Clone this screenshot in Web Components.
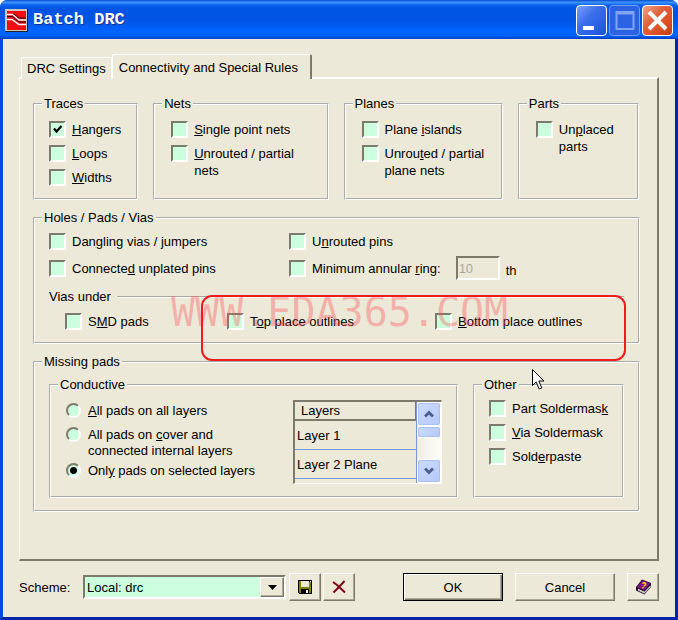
<!DOCTYPE html>
<html lang="en">
<head>
<meta charset="utf-8">
<title>Batch DRC</title>
<style>
    body {
        margin: 0;
        background: #fff;
        color: #000;
        font: 13px/17px "Liberation Sans", Arial, sans-serif;
        --face: #ece9d8;
        --field: #ccffdd;
        --shade: #7d7a6c;
        --edge: #aca899;
    }
    .top { display: grid; grid-template-columns: 105fr 175fr 159fr 121fr; gap: 15px; padding-right: 1px; }
    .top dlg-group { --top: 9px; }
    .list { display: flex; flex-direction: column; gap: 7px; }
    .inset { padding-left: 2px; }
    .holes { display: grid; grid-template-columns: 240fr 335fr; row-gap: 6px; align-items: center; margin-bottom: 8px; }
    .ring { display: flex; align-items: center; }
    .vias { position: relative; }
    .via-row { display: grid; grid-template-columns: 162fr 208fr 189fr; padding: 8px 0 0 16px; }
    .missing { display: grid; grid-template-columns: 409fr 151fr; gap: 15px; position: relative; }
    .conductive { display: flex; justify-content: space-between; }
    .radios { display: flex; flex-direction: column; gap: 4px; padding-top: 3px; }
</style>
</head>
<body>
<xp-window caption="Batch DRC">
    <dlg-tabs>
        <dlg-tab slot="tabs">DRC Settings</dlg-tab>
        <dlg-tab slot="tabs" active>Connectivity and Special Rules</dlg-tab>

        <div class="top">
            <dlg-group legend="Traces">
                <div class="list">
                    <dlg-check checked><u>H</u>angers</dlg-check>
                    <dlg-check><u>L</u>oops</dlg-check>
                    <dlg-check><u>W</u>idths</dlg-check>
                </div>
            </dlg-group>
            <dlg-group legend="Nets">
                <div class="list inset">
                    <dlg-check><u>S</u>ingle point nets</dlg-check>
                    <dlg-check><u>U</u>nrouted / partial<br>nets</dlg-check>
                </div>
            </dlg-group>
            <dlg-group legend="Planes">
                <div class="list inset">
                    <dlg-check>Plane <u>i</u>slands</dlg-check>
                    <dlg-check>Unrou<u>t</u>ed / partial<br>plane nets</dlg-check>
                </div>
            </dlg-group>
            <dlg-group legend="Parts">
                <div class="list inset">
                    <dlg-check>Un<u>p</u>laced<br>parts</dlg-check>
                </div>
            </dlg-group>
        </div>

        <dlg-group legend="Holes / Pads / Vias">
            <div class="holes">
                <dlg-check>Dan<u>g</u>ling vias / jumpers</dlg-check>
                <dlg-check>U<u>n</u>routed pins</dlg-check>
                <dlg-check>Connecte<u>d</u> unplated pins</dlg-check>
                <div class="ring">
                    <dlg-check>Minimum annular <u>r</u>ing:</dlg-check>
                    <dlg-field label="Minimum annular ring" value="10" unit="th"></dlg-field>
                </div>
            </div>
            <div class="vias">
                <dlg-section heading="Vias under">
                    <div class="via-row">
                        <dlg-check>S<u>M</u>D pads</dlg-check>
                        <dlg-check>T<u>o</u>p place outlines</dlg-check>
                        <dlg-check><u>B</u>ottom place outlines</dlg-check>
                    </div>
                </dlg-section>
                <water-mark>WWW.EDA365.COM</water-mark>
                <call-out></call-out>
            </div>
        </dlg-group>

        <dlg-group legend="Missing pads">
            <div class="missing">
                <dlg-group legend="Conductive">
                    <div class="conductive">
                        <div class="radios">
                            <dlg-radio><u>A</u>ll pads on all layers</dlg-radio>
                            <dlg-radio>All pads on <u>c</u>over and<br>connected internal layers</dlg-radio>
                            <dlg-radio checked>Onl<u>y</u> pads on selected layers</dlg-radio>
                        </div>
                        <layer-list rows="Layer 1|Layer 2 Plane"></layer-list>
                    </div>
                </dlg-group>
                <dlg-group legend="Other">
                    <div class="list">
                        <dlg-check>Part Soldermas<u>k</u></dlg-check>
                        <dlg-check><u>V</u>ia Soldermask</dlg-check>
                        <dlg-check>Sold<u>e</u>rpaste</dlg-check>
                    </div>
                </dlg-group>
                <mouse-arrow></mouse-arrow>
            </div>
        </dlg-group>
    </dlg-tabs>
    <dlg-footer slot="footer"></dlg-footer>
</xp-window>

<script>
// Small helper: every element renders once into an open shadow root
class Base extends HTMLElement {
    connectedCallback() {
        if (this.shadowRoot) return;
        this.attachShadow({ mode: "open" });
        this.shadowRoot.innerHTML = this.render();
        this.ready();
    }
    ready() {}
}

// Window frame and title bar
class XpWindow extends Base {
    render() {
        return `
            <style>
            :host {
                display: flex;
                flex-direction: column;
                box-sizing: border-box;
                min-height: 100vh;
                background: var(--face);
                border: 3px solid #0a48dc;
                border-top: 0;
                border-right-color: #0526a8;
                border-bottom-color: #0526a8;
                border-radius: 8px 8px 0 0;
            }
            header {
                display: flex;
                align-items: center;
                gap: 2px;
                height: 39px;
                margin: 0 -3px;
                padding: 1px 5px 0;
                box-sizing: border-box;
                border-radius: 7px 7px 0 0;
                background: linear-gradient(#0a4cd0, #3c94ff 6%, #0a62ee 13%, #0054e3 22%, #0055e6 55%, #0064ff 80%, #0062fa 92%, #003ec0);
            }
            h1 {
                flex: 1;
                margin: 0 0 0 3px;
                color: #fff;
                font: bold 17px/24px "Liberation Mono", monospace;
                text-shadow: 1px 1px #0a2f8c;
            }
            button {
                width: 31px;
                height: 31px;
                padding: 0;
                border: 1px solid #fff;
                border-radius: 4px;
                background: linear-gradient(135deg, #7ea2f5, #3b6ee8 40%, #2a62e4 70%, #1d4fd0);
            }
            button svg { display: block; }
            .max { border-color: #6f9cf5; background: #2a62e2; }
            .close { background: linear-gradient(135deg, #f0a48c, #e2603c 40%, #dc4f24 70%, #c23c14); }
            main {
                flex: 1;
                display: flex;
                flex-direction: column;
                padding: 15px 16px 16px;
            }
            </style>
            <header>
                <svg width="23" height="23" viewBox="0 0 23 23">
                    <rect width="23" height="23" fill="#222"/>
                    <rect width="22" height="22" fill="#ccc8c0"/>
                    <rect x="2" y="2" width="19" height="19" fill="#f20d12"/>
                    <g fill="none" stroke="#fff" stroke-width="1.5">
                        <path d="M2 5.500h6l6 5.500h7"/>
                        <path d="M2 10.500h5l7 5h7"/>
                    </g>
                    <g fill="none" stroke="#3a0508">
                        <path d="M2 7.500h5.500l6.500 5.500h7"/>
                        <path d="M8 4.500l6 4.500h7"/>
                    </g>
                </svg>
                <h1>${this.getAttribute("caption")}</h1>
                <button aria-label="Minimize"><svg width="29" height="29"><path d="M6 20h11v4H6z" fill="#fff"/></svg></button>
                <button class="max" aria-label="Maximize" disabled><svg width="29" height="29"><path d="M6 7.500h17M6.500 6v17h17V6z" fill="none" stroke="#7fa4f4" stroke-width="2"/></svg></button>
                <button class="close" aria-label="Close"><svg width="29" height="29"><path d="M6 6l17 17M23 6L6 23" stroke="#fff" stroke-width="4"/></svg></button>
            </header>
            <main>
                <slot></slot>
                <slot name="footer"></slot>
            </main>
        `;
    }
}
customElements.define("xp-window", XpWindow);

// Tab strip with its raised page
class DlgTabs extends Base {
    render() {
        return `
            <style>
            :host { flex: 1; display: flex; flex-direction: column; }
            .strip { display: flex; align-items: flex-end; padding-left: 2px; height: 25px; margin-bottom: -2px; z-index: 1; }
            .page {
                flex: 1;
                display: flex;
                flex-direction: column;
                gap: 10px;
                padding: 17px 17px 17px 13px;
                border: solid;
                border-width: 2px 2px 2px 1px;
                border-color: #fff var(--shade) var(--shade) #fff;
            }
            </style>
            <div class="strip" role="tablist"><slot name="tabs"></slot></div>
            <div class="page" role="tabpanel"><slot></slot></div>
        `;
    }
}
customElements.define("dlg-tabs", DlgTabs);

class DlgTab extends Base {
    render() {
        return `
            <style>
            :host { display: block; }
            button {
                display: block;
                height: 22px;
                padding: 0 5px;
                border: 1px solid #fff;
                border-bottom: 0;
                border-radius: 2px 2px 0 0;
                background: var(--face);
                color: inherit;
                font: inherit;
                white-space: nowrap;
            }
            :host([active]) button {
                height: 25px;
                padding: 0 12px 0 6px;
                border-right: 2px solid var(--shade);
            }
            </style>
            <button role="tab" aria-selected="${this.hasAttribute("active")}"><slot></slot></button>
        `;
    }
}
customElements.define("dlg-tab", DlgTab);

// Etched group box
class DlgGroup extends Base {
    render() {
        return `
            <style>
            :host { display: grid; min-width: 0; }
            fieldset {
                min-width: 0;
                margin: 0;
                padding: var(--top, 7px) 14px 12px;
                border: 2px groove #fff;
            }
            legend { margin-left: -7px; padding: 0 2px; line-height: 16px; }
            </style>
            <fieldset>
                <legend>${this.getAttribute("legend")}</legend>
                <slot></slot>
            </fieldset>
        `;
    }
}
customElements.define("dlg-group", DlgGroup);

// Heading followed by an etched line
class DlgSection extends Base {
    render() {
        return `
            <style>
            :host { display: block; }
            div { display: flex; align-items: center; gap: 6px; }
            div::after { content: ""; flex: 1; height: 1px; background: var(--edge); border-bottom: 1px solid #fff; }
            </style>
            <div id="head">${this.getAttribute("heading")}</div>
            <section aria-labelledby="head"><slot></slot></section>
        `;
    }
}
customElements.define("dlg-section", DlgSection);

class DlgCheck extends Base {
    render() {
        return `
            <style>
            :host { display: block; }
            label { display: flex; gap: 6px; white-space: nowrap; }
            input {
                appearance: none;
                flex: none;
                width: 17px;
                height: 17px;
                margin: 0;
                border: 2px solid;
                border-color: var(--shade) #fff #fff var(--shade);
                background: var(--field);
            }
            input:checked {
                background: var(--field) url('data:image/svg+xml,<svg xmlns="http://www.w3.org/2000/svg" width="13" height="13"><path d="M3 5.500l2.500 3 5-5.500" fill="none" stroke="black" stroke-width="2.200"/></svg>');
            }
            </style>
            <label><input type="checkbox" ${this.hasAttribute("checked") ? "checked" : ""}><span><slot></slot></span></label>
        `;
    }
}
customElements.define("dlg-check", DlgCheck);

class DlgRadio extends Base {
    render() {
        return `
            <style>
            :host { display: block; min-height: 20px; line-height: 16px; padding-left: 1px; }
            label { display: flex; gap: 7px; white-space: nowrap; }
            input {
                appearance: none;
                flex: none;
                width: 15px;
                height: 15px;
                margin: 0;
                border: 2px solid;
                border-color: var(--shade) #fff #fff var(--shade);
                border-radius: 50%;
                background: var(--field);
            }
            input:checked { background: radial-gradient(circle, #000 3px, var(--field) 4px); }
            </style>
            <label><input type="radio" ${this.hasAttribute("checked") ? "checked" : ""}><span><slot></slot></span></label>
        `;
    }
    // each radio sits in its own root, so the siblings are cleared by hand
    ready() {
        const input = this.shadowRoot.querySelector("input");
        input.addEventListener("change", () => {
            for (const other of this.parentNode.querySelectorAll("dlg-radio")) {
                if (other !== this) other.shadowRoot.querySelector("input").checked = false;
            }
        });
    }
}
customElements.define("dlg-radio", DlgRadio);

class DlgField extends Base {
    render() {
        return `
            <style>
            :host { display: block; margin-left: 15px; }
            label { display: flex; align-items: center; gap: 6px; }
            input {
                box-sizing: border-box;
                width: 44px;
                height: 24px;
                padding: 0 1px;
                border: 2px solid;
                border-color: var(--shade) #fff #fff var(--shade);
                background: var(--face);
                color: var(--edge);
                font: inherit;
            }
            span { padding-top: 4px; }
            </style>
            <label><input aria-label="${this.getAttribute("label")}" value="${this.getAttribute("value")}" disabled><span>${this.getAttribute("unit")}</span></label>
        `;
    }
}
customElements.define("dlg-field", DlgField);

// Scrolling list of layers
class LayerList extends Base {
    render() {
        const rows = this.getAttribute("rows").split("|");
        return `
            <style>
            :host {
                display: flex;
                box-sizing: border-box;
                width: 149px;
                height: 84px;
                border: 1px solid #fff;
                border-top: 2px solid var(--shade);
                border-left: 2px solid var(--shade);
            }
            .view { flex: 1; overflow: hidden; border-right: 1px solid #7b96d8; }
            table { width: 100%; border-collapse: separate; border-spacing: 0; }
            th {
                height: 17px;
                padding: 0 6px;
                border-right: 1px solid var(--shade);
                border-bottom: 2px solid var(--shade);
                font-weight: normal;
                text-align: left;
            }
            td { height: 28px; padding: 0 2px; border-bottom: 1px solid #7b96d8; }
            .bar { display: flex; flex-direction: column; width: 24px; background: linear-gradient(90deg, #f0ede2, #fefefb); }
            .bar > * {
                box-sizing: border-box;
                flex: none;
                height: 24px;
                padding: 0;
                border: 1px solid #fff;
                outline: 1px solid #a9c0f2;
                outline-offset: -2px;
                border-radius: 3px;
                background: linear-gradient(135deg, #cddcff, #b4c8f8);
            }
            .bar .thumb { height: 12px; }
            .bar :last-child { margin-top: auto; }
            svg { display: block; margin: auto; }
            path { fill: none; stroke: #4a618c; stroke-width: 3; }
            </style>
            <div class="view">
                <table>
                    <thead><tr><th>Layers</th></tr></thead>
                    <tbody>${rows.map(r => `<tr><td>${r}</td></tr>`).join("")}</tbody>
                </table>
            </div>
            <div class="bar">
                <button aria-label="Scroll up"><svg width="10" height="8"><path d="M1 6.500l4-4 4 4"/></svg></button>
                <div class="thumb"></div>
                <button aria-label="Scroll down"><svg width="10" height="8"><path d="M1 1.500l4 4 4-4"/></svg></button>
            </div>
        `;
    }
}
customElements.define("layer-list", LayerList);

// Classic raised push button
class DlgButton extends Base {
    render() {
        return `
            <style>
            :host { display: block; width: 32px; }
            :host([wide]) { width: 100px; }
            button {
                display: grid;
                place-items: center;
                box-sizing: border-box;
                width: 100%;
                height: 28px;
                padding: 0;
                border: 1px solid;
                border-color: #fff var(--shade) var(--shade) #fff;
                box-shadow: inset -1px -1px var(--edge);
                background: var(--face);
                color: inherit;
                font: inherit;
            }
            :host([default]) button {
                border-color: #000;
                box-shadow: inset 1px 1px #fff, inset -1px -1px var(--shade), inset -2px -2px var(--edge);
            }
            </style>
            <button aria-label="${this.getAttribute("label")}"><slot></slot></button>
        `;
    }
}
customElements.define("dlg-button", DlgButton);

class DlgFooter extends Base {
    render() {
        return `
            <style>
            :host { display: flex; align-items: center; padding-top: 12px; }
            .scheme { flex: 1; display: flex; align-items: center; }
            label { width: 64px; }
            .combo {
                flex: 1;
                display: grid;
                box-sizing: border-box;
                height: 24px;
                border: 2px solid;
                border-color: var(--shade) #fff #fff var(--shade);
            }
            select {
                grid-area: 1 / 1;
                appearance: none;
                padding: 0 24px 0 2px;
                border: 0;
                border-radius: 0;
                background: var(--field);
                color: inherit;
                font: inherit;
            }
            .drop {
                grid-area: 1 / 1;
                justify-self: end;
                display: grid;
                place-items: center;
                width: 22px;
                border: 1px solid;
                border-color: #fff var(--shade) var(--shade) #fff;
                box-shadow: inset -1px -1px var(--edge);
                background: var(--face);
                pointer-events: none;
            }
            .tools { display: flex; gap: 2px; margin: 0 48px 0 3px; }
            .actions { display: flex; gap: 12px; }
            svg { display: block; }
            </style>
            <div class="scheme">
                <label for="scheme">Scheme:</label>
                <div class="combo">
                    <select id="scheme"><option>Local: drc</option></select>
                    <span class="drop"><svg width="9" height="5"><path d="M0 0h9L4.500 5z"/></svg></span>
                </div>
            </div>
            <div class="tools">
                <dlg-button label="Save">
                    <svg width="14" height="14" shape-rendering="crispEdges">
                        <path d="M0 0h14v14H1l-1-1z"/>
                        <path d="M1 1h2v6h8V2h2v11h-2V9H3v4H1z" fill="#808000"/>
                        <path d="M3 1h8v6H3z" fill="#ece9d8"/>
                        <path d="M12 1h1v1h-1zM8 10h2v3H8z" fill="#fff"/>
                    </svg>
                </dlg-button>
                <dlg-button label="Delete">
                    <svg width="14" height="14"><path d="M1 2l4 3 8 7.500M12.500 1L7 7l-5.500 5.500" fill="none" stroke="#800010" stroke-width="1.900"/></svg>
                </dlg-button>
            </div>
            <div class="actions">
                <dlg-button label="OK" wide default>OK</dlg-button>
                <dlg-button label="Cancel" wide>Cancel</dlg-button>
                <dlg-button label="Help">
                    <svg width="17" height="16">
                        <path d="M1 8L7 .5 16 4v4l-6.500 7.500L1 11.500z" fill="#2a0a30"/>
                        <path d="M2 8l5.500-6.500L15 4.500 9.500 11z" fill="#86108c"/>
                        <path d="M3 9.800l6.500 3L15.500 6.500v1.500l-6 6.500L3 11.500z" fill="#fff"/>
                        <path d="M3 10.800l6.500 3 6-6.500" fill="none" stroke="#8a8a8a" stroke-width=".6"/>
                        <path d="M7.500 4.500q2-1.500 3 0t-1.800 2.700M8 8v1.500" fill="none" stroke="#ffd800" stroke-width="1.500"/>
                    </svg>
                </dlg-button>
            </div>
        `;
    }
}
customElements.define("dlg-footer", DlgFooter);

// Marks laid over the dialog
class WaterMark extends Base {
    render() {
        return `
            <style>
            :host {
                position: absolute;
                left: 122px;
                top: 4px;
                color: rgba(255, 70, 80, .34);
                font: 40px/40px "DejaVu Sans Mono", monospace;
                white-space: nowrap;
                pointer-events: none;
            }
            </style>
            <slot></slot>
        `;
    }
}
customElements.define("water-mark", WaterMark);

class CallOut extends Base {
    render() {
        return `
            <style>
            :host {
                position: absolute;
                box-sizing: border-box;
                left: 152px;
                right: -2px;
                top: 7px;
                height: 66px;
                border: 2px solid #ee1c1c;
                border-radius: 11px;
                pointer-events: none;
            }
            </style>
        `;
    }
}
customElements.define("call-out", CallOut);

class MouseArrow extends Base {
    render() {
        return `
            <style>
            :host { position: absolute; right: 79px; top: -8px; pointer-events: none; }
            svg { display: block; }
            </style>
            <svg width="13" height="21"><path d="M.5.5v16l3.700-3.500 3 7 2.600-1.100-3-6.900h5.200z" fill="#fff" stroke="#000"/></svg>
        `;
    }
}
customElements.define("mouse-arrow", MouseArrow);
</script>
</body>
</html>
